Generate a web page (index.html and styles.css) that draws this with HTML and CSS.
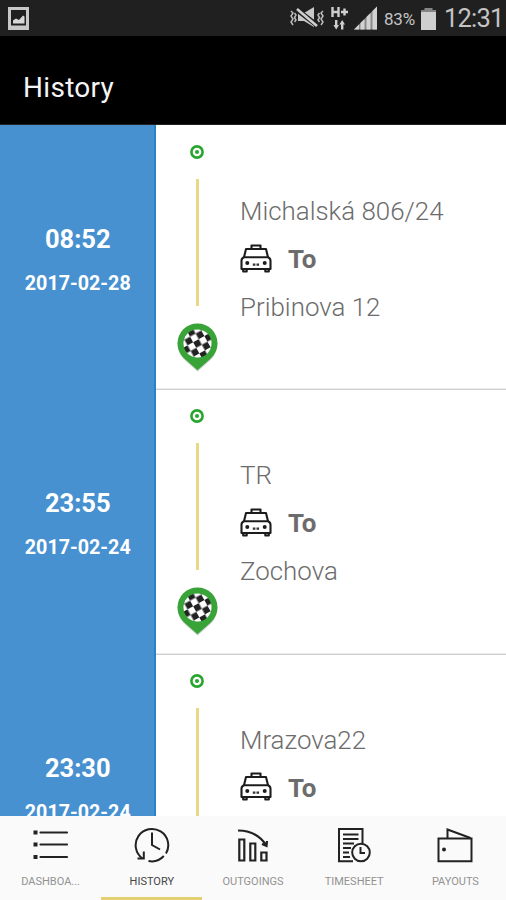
FILE: index.html
```html
<!DOCTYPE html>
<html lang="en">
<head>
<meta charset="utf-8">
<title>History</title>
<link rel="stylesheet" href="styles.css">
</head>
<body>
<svg class="defs" width="0" height="0">
  <defs>
    <pattern id="checks" width="12.8" height="12.8" patternUnits="userSpaceOnUse" patternTransform="translate(20.5 20.5) rotate(-29) translate(-3.2 -3.2)">
      <rect width="12.8" height="12.8" fill="#fff"/>
      <rect width="6.4" height="6.4" fill="#222"/>
      <rect x="6.4" y="6.4" width="6.4" height="6.4" fill="#222"/>
    </pattern>
    <symbol id="start" viewBox="0 0 14 14">
      <circle cx="7" cy="7" r="5.6" fill="#fff" stroke="#27a52c" stroke-width="2.6"/>
      <circle cx="7" cy="7" r="2" fill="#27a52c"/>
    </symbol>
    <symbol id="pin" viewBox="0 0 41 50">
      <path d="M20.5 48.8 8 37.5C3 33 .8 27 .8 20.5a19.7 19.7 0 0 1 39.4 0c0 6.5-2.2 12.5-7.2 17z" fill="#bbb" opacity=".6"/>
      <path d="M20.5 47.2 8.3 36.5C3.2 32 .5 26.5 .5 20.2a20 19.7 0 0 1 40 0c0 6.300-2.700 11.800-7.800 16.300z" fill="#38a438"/>
      <circle cx="20.5" cy="20.5" r="14" fill="url(#checks)"/>
    </symbol>
    <symbol id="taxi" viewBox="0 0 32 29">
      <g fill="none" stroke="#1c1c1c" stroke-width="2.1" stroke-linejoin="round">
        <path d="M11.500 5V1.500h9V5M4 13.300 6 5h20l2 8.300"/>
        <path d="M4 13.300h24q2.500 1 2.500 3.500V25H1.500V16.800q0-2.500 2.500-3.500zM3.200 25v2.500h3.500V25M25.300 25v2.500h3.500V25"/>
      </g>
      <path d="M12.800 19.500h2.600v2.300h-2.600zM16.500 19.500h2.600v2.300h-2.600z" fill="#333"/>
      <circle cx="7.300" cy="19" r="2" fill="#1c1c1c"/><circle cx="24.700" cy="19" r="2" fill="#1c1c1c"/>
    </symbol>
  </defs>
</svg>
<div class="phone">
  <header class="status">
    <svg class="shot" viewBox="0 0 22 24"><path fill="#c8c8c8" fill-rule="evenodd" d="M0 0h21v23H0zM3 3v15.500h15V3z"/><path fill="#d8d8d8" d="M5 16.500v-3l3-2 3 1.500 4-4.500 1.500 1v7z"/></svg>
    <div class="status-right">
      <svg class="signals" viewBox="0 0 88 26">
        <g fill="none" stroke="#bcbcbc" stroke-width="1.500"><path d="M1 7l2 2-2 3 2 3-2 3 2 3M4.500 9l1.500 2-1.500 2.500 1.500 2.500-1.500 2M33 7l-2 2 2 3-2 3 2 3-2 3M29.500 9 28 11l1.500 2.500L28 16l1.500 2"/></g>
        <path fill="#c9c9c9" d="M8 9h6l10-6v20l-10-6H8z"/>
        <path d="M6 5l22 17" stroke="#202020" stroke-width="5"/><path d="M7 5l20 17" stroke="#d0d0d0" stroke-width="2.500"/>
        <path fill="none" stroke="#cfcfcf" stroke-width="2.400" d="M42.500 3v10M48.500 3v10M42.500 8h6M51 8h7M54.500 4.500v7"/>
        <path fill="#cfcfcf" d="M45 16h2.400v5H49l-2.800 4.500-2.800-4.500H45zM51 25.500h2.400v-5H55L52.200 16l-2.800 4.500H51z"/>
        <path fill="#8b8b8b" d="M64 25.500 87 2.500v23z"/><path fill="#d2d2d2" d="M64 25.500l5-5v5zM70.500 25.500V19l4-4v10.500zM76.500 25.500V13l4-4v16.500zM82.500 25.500V7L87 2.500v23z"/>
      </svg>
      <span class="percent">83%</span>
      <svg class="battery" viewBox="0 0 15 22"><path fill="#858585" d="M3.500 0h8v2H15v5H0V2h3.500z"/><path fill="#cfcfcf" d="M0 4h15v18H0z"/></svg>
      <span class="clock">12:31</span>
    </div>
  </header>
  <div class="appbar"><h1>History</h1></div>
  <main class="list">
    <article class="ride">
      <div class="when"><b class="time">08:52</b><b class="date">2017-02-28</b></div>
      <div class="trip">
        <div class="track"><svg class="start"><use href="#start"/></svg><i class="line"></i><svg class="pin"><use href="#pin"/></svg></div>
        <div class="places"><p>Michalská 806/24</p><p class="to"><svg class="taxi"><use href="#taxi"/></svg><b>To</b></p><p>Pribinova 12</p></div>
      </div>
    </article>
    <article class="ride">
      <div class="when"><b class="time">23:55</b><b class="date">2017-02-24</b></div>
      <div class="trip">
        <div class="track"><svg class="start"><use href="#start"/></svg><i class="line"></i><svg class="pin"><use href="#pin"/></svg></div>
        <div class="places"><p>TR</p><p class="to"><svg class="taxi"><use href="#taxi"/></svg><b>To</b></p><p>Zochova</p></div>
      </div>
    </article>
    <article class="ride">
      <div class="when"><b class="time">23:30</b><b class="date">2017-02-24</b></div>
      <div class="trip">
        <div class="track"><svg class="start"><use href="#start"/></svg><i class="line"></i></div>
        <div class="places"><p>Mrazova22</p><p class="to"><svg class="taxi"><use href="#taxi"/></svg><b>To</b></p></div>
      </div>
    </article>
  </main>
  <nav class="tabs">
    <a class="tab"><svg viewBox="0 0 36 36"><path d="M7.500 5.500H34M7.500 17.500H34M7.500 30H34" stroke="#222" stroke-width="2.200" stroke-linecap="round"/><path d="M.5 3.500h4v4h-4zM.5 15.500h4v4h-4zM.5 28h4v4h-4z" fill="#222"/></svg><span>DASHBOA...</span></a>
    <a class="tab active"><svg viewBox="0 0 36 36"><g fill="none" stroke="#222" stroke-width="2"><path d="M8.500 31.500A16.300 16.300 0 1 1 32 26.500M29.800 29A16.300 16.300 0 0 1 14.500 34"/><path d="M3.500 31.500H9.800V24.500M18 5.500V18l8 4.500"/></g></svg><span>HISTORY</span></a>
    <a class="tab"><svg viewBox="0 0 36 36"><g fill="none" stroke="#222" stroke-width="2.200"><path d="M4.300 12.500h5v21h-5zM15.300 16.500h5v17h-5zM26.300 25.500h5.200v8h-5.200z"/><path d="M3 3.500C15 3.500 25 9 31 18M27 17l4.500 2 .5-5"/></g></svg><span>OUTGOINGS</span></a>
    <a class="tab"><svg viewBox="0 0 36 36"><g fill="none" stroke="#222" stroke-width="2"><path d="M17 34.300H3V2h23.500v14.500"/><path d="M7 7.500h15.500M7 12h15.500M7 16.500h11M7 21h8M7 25.500h6M7 30h7"/><circle cx="25" cy="25.500" r="8.800"/><path d="M24.500 20v6H29"/></g></svg><span>TIMESHEET</span></a>
    <a class="tab"><svg viewBox="0 0 36 36"><g fill="none" stroke="#222" stroke-width="2"><path d="M1.500 11.500h33v22.700h-33z"/><path d="M10.500 11V2.500L33.500 11"/></g><circle cx="7" cy="22.500" r="2" fill="#222"/></svg><span>PAYOUTS</span></a>
  </nav>
</div>
</body>
</html>
```
FILE: styles.css
```css
* { box-sizing: border-box; }
body { margin: 0; font-family: Roboto, "Liberation Sans", sans-serif; }
h1, p { margin: 0; }
svg { display: block; flex: none; }
.defs { position: absolute; }
.phone { width: 506px; height: 900px; display: flex; flex-direction: column; overflow: hidden; background: #fff; }

.status { flex: none; height: 36px; padding: 0 3px 0 8px; background: #202020; color: #c4c4c4; display: flex; justify-content: space-between; align-items: flex-start; }
.shot { width: 22px; height: 24px; margin-top: 7px; }
.status-right { display: flex; }
.signals { width: 88px; height: 26px; margin: 4px 6px 0 0; }
.percent { width: 31px; font-size: 17px; line-height: 38px; letter-spacing: -.2px; }
.battery { width: 15px; height: 22px; margin: 8px 8px 0 6px; }
.clock { width: 59px; font-size: 25.500px; line-height: 37px; letter-spacing: -.8px; white-space: nowrap; }

.appbar { flex: none; height: 89px; padding-left: 23px; background: #000; display: flex; align-items: center; border-bottom: 1px solid #222; }
.appbar h1 { color: #f4f4f4; font-size: 28px; font-weight: 400; line-height: 34px; letter-spacing: .3px; margin-top: 15px; }

.list { height: 691px; flex: none; overflow: hidden; }
.ride { height: 264.4px; display: flex; }
.when { width: 155.500px; padding: 97px 0 0 2px; background: #4891d0; border-right: 2px solid #2484c7; color: #fff; text-align: center; display: flex; flex-direction: column; }
.time { font-size: 25.500px; line-height: 34px; }
.date { font-size: 19.700px; line-height: 26px; margin-top: 15px; }
.trip { flex: 1; display: flex; box-shadow: inset 0 -1px #ececec, 0 1px #cfcfcf; }
.track { width: 41px; margin-left: 21px; display: flex; flex-direction: column; align-items: center; }
.start { width: 14px; height: 14px; margin-top: 20px; }
.line { flex: none; width: 3px; height: 127px; margin-top: 20px; background: #e9d987; }
.pin { width: 41px; height: 50px; margin-top: 17px; }
.places { margin-left: 22.500px; padding-top: 62px; color: #6c6c6c; font-size: 25.900px; font-weight: 300; line-height: 48px; white-space: nowrap; }
.places p { height: 48px; }
.to { display: flex; align-items: center; gap: 16px; }
.to b { font-weight: 700; }
.taxi { width: 32px; height: 29px; margin-top: -2px; }

.tabs { flex: 1; display: grid; grid-template-columns: repeat(5, 1fr); background: #fafafa; }
.tab { display: flex; flex-direction: column; align-items: center; padding-top: 11px; color: #929292; font-size: 11px; line-height: 14px; border-bottom: 3px solid transparent; }
.tab svg { width: 36px; height: 36px; }
.tab span { margin-top: 12px; }
.tab.active { color: #444; border-bottom-color: #e3d071; }
```
